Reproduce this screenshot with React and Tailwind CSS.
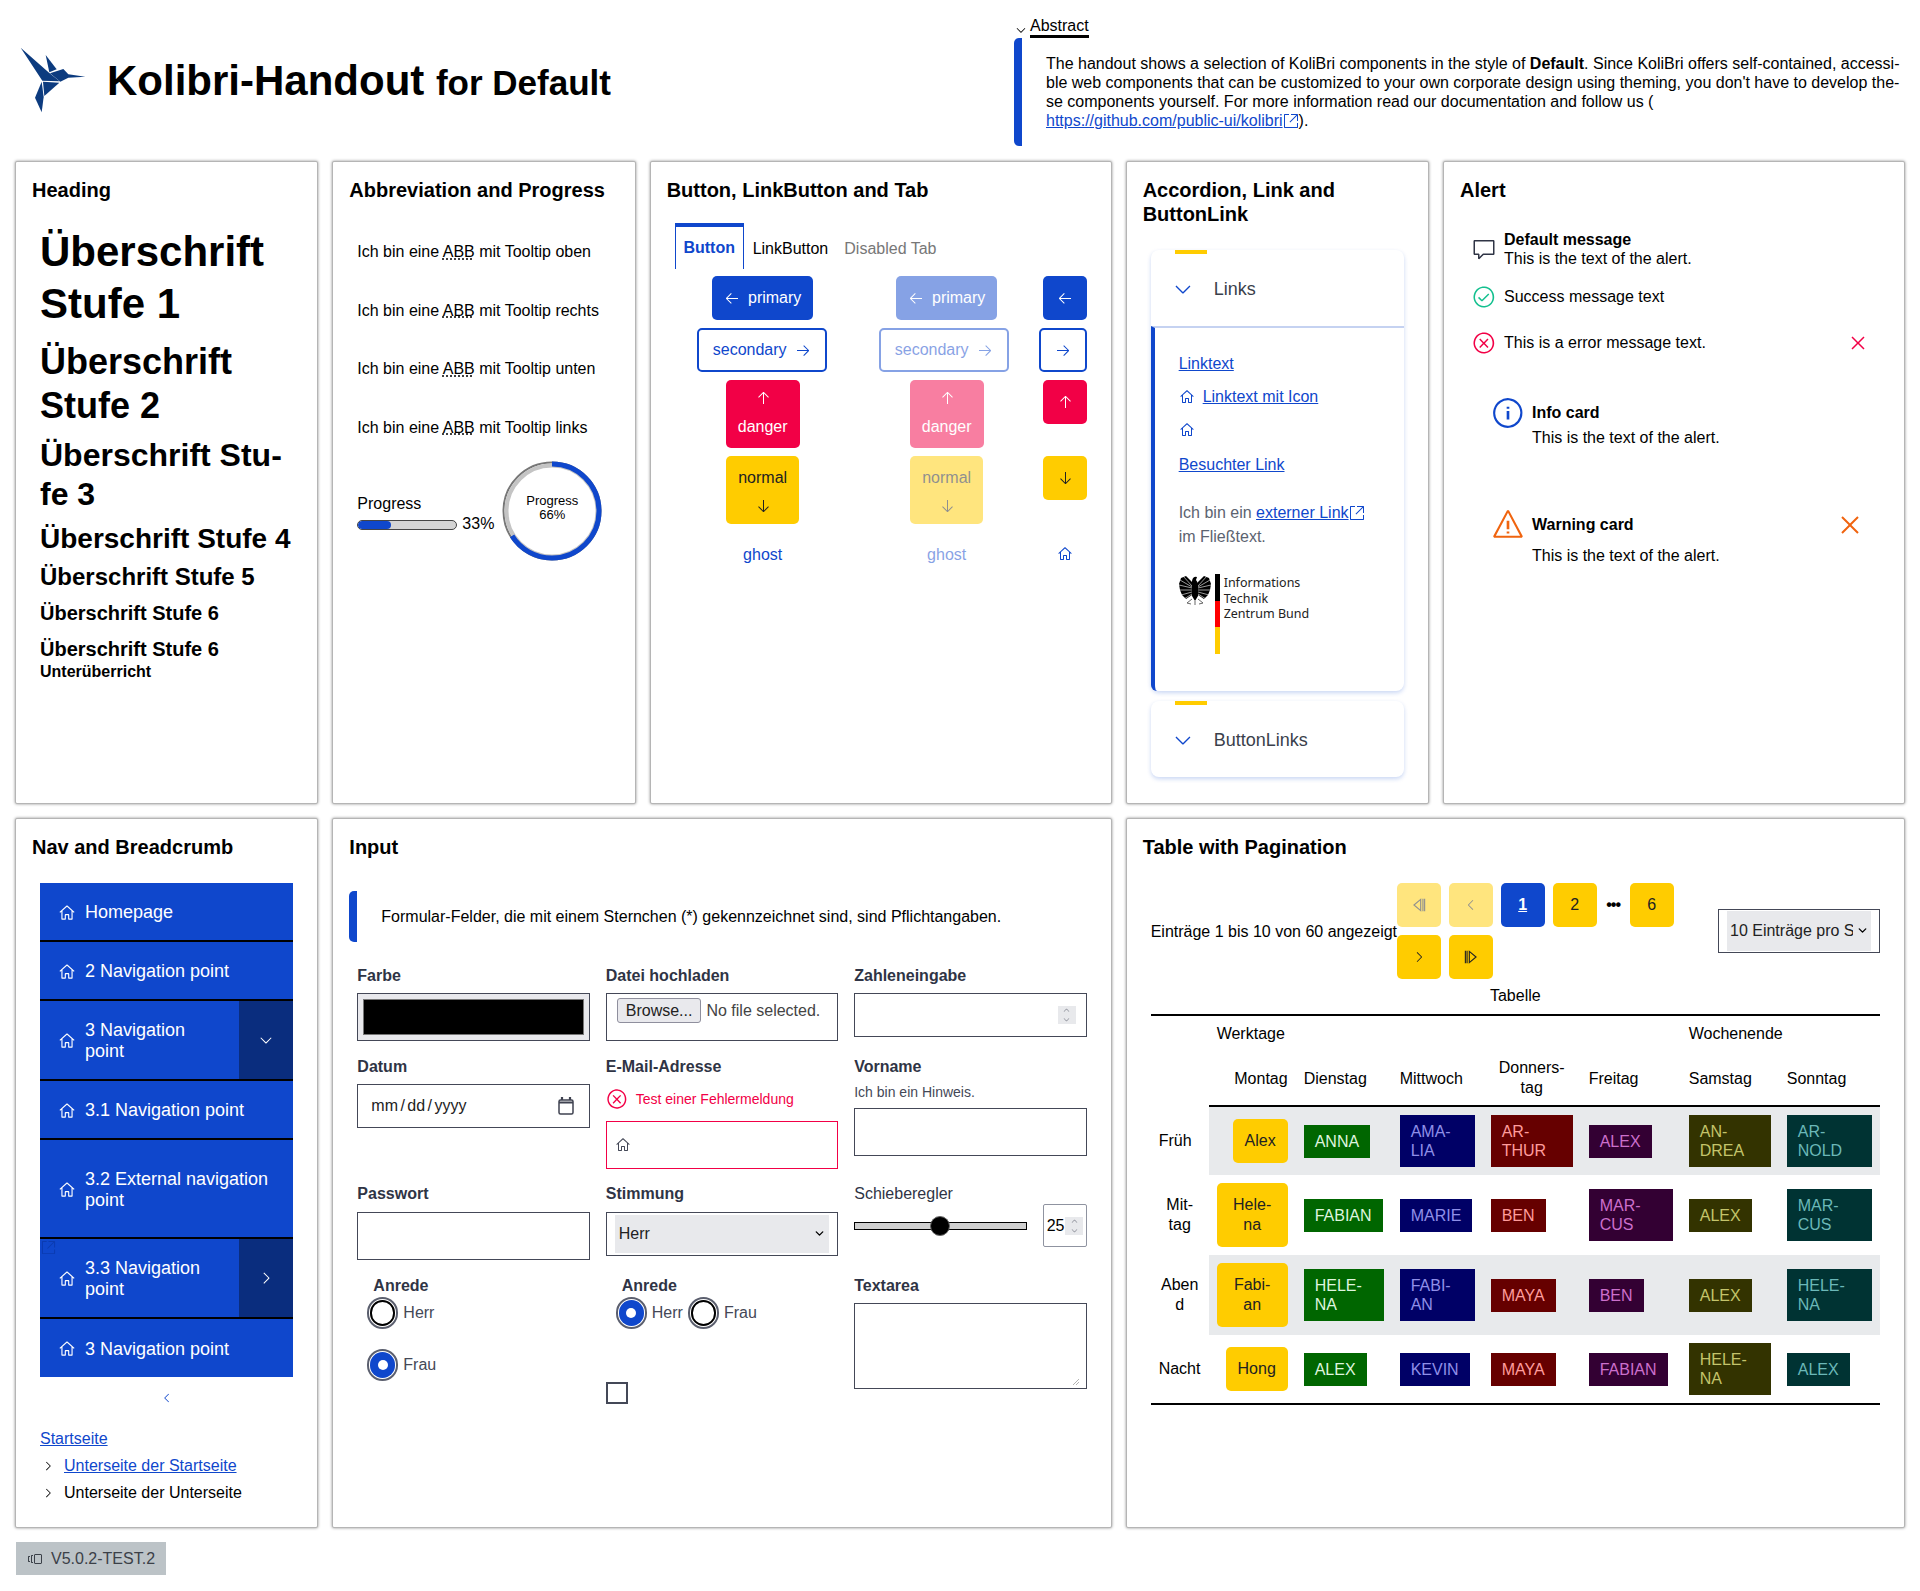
import React from 'react';
import {
  VscArrowDown, VscArrowLeft, VscArrowRight, VscArrowUp, VscChevronDown, VscChevronLeft,
  VscChevronRight, VscChevronUp, VscClose, VscComment, VscError, VscHome, VscInfo,
  VscLinkExternal, VscPass, VscVersions, VscWarning,
} from 'react-icons/vsc';
import { ChevronDown } from 'lucide-react';

// Small drawings that the icon package does not have
const KolibriLogo = () => (
  <svg width="90" height="80" viewBox="0 0 270 240" className="shrink-0">
    <g fill="#0c3b7f">
      <polygon points="32,20 118,96 149,121 97,119" />
      <polygon points="107,42 140,85 118,94" />
      <polygon points="120,97 160,84 175,100 226,107 175,110 151,122" />
      <polygon points="99,122 148,125 103,165" />
      <polygon points="95,122 101,168 95,214 75,170" />
    </g>
  </svg>
);

const Eagle = () => (
  <svg width="32" height="30" viewBox="0 0 32 30" className="shrink-0">
    <path d="M13 7 L7 1 L2 3 L0 9 L1 15 L3 20 L7 24 L13 20 Z" fill="#000" />
    <path d="M19 7 L25 1 L30 3 L32 9 L31 15 L29 20 L25 24 L19 20 Z" fill="#000" />
    <g stroke="#fff" strokeWidth="0.6" fill="none">
      <path d="M13 11 L4 1 M13 12 L1 5 M13 13 L0 10 M13 15 L0 15 M13 17 L2 20 M13 19 L5 24" />
      <path d="M19 11 L28 1 M19 12 L31 5 M19 13 L32 10 M19 15 L32 15 M19 17 L30 20 M19 19 L27 24" />
    </g>
    <path d="M13 6 Q14 1 18 2 L17 5 L19 8 L19 21 L16 26 L13 21 Z" fill="#000" />
    <g stroke="#555" strokeWidth="0.9" fill="none">
      <path d="M13 24 L8 28 L12 29 M19 24 L24 28 L20 29 M16 26 L16 30" />
    </g>
  </svg>
);

const FirstIcon = () => (
  <svg width="18" height="18" viewBox="0 0 16 16" fill="none" stroke="currentColor" strokeWidth="1">
    <path d="M9.5 3 L3.5 8 L9.5 13 Z M11.5 2.5 V13.5" />
    <path d="M13 2.5 V13.5" />
  </svg>
);

const LastIcon = () => (
  <svg width="18" height="18" viewBox="0 0 16 16" fill="none" stroke="currentColor" strokeWidth="1">
    <path d="M6.5 3 L12.5 8 L6.5 13 Z M4.5 2.5 V13.5" />
    <path d="M3 2.5 V13.5" />
  </svg>
);

const CalendarIcon = () => (
  <svg width="16" height="18" viewBox="0 0 16 18" fill="none" stroke="#3f4250" strokeWidth="1.5">
    <rect x="1" y="3" width="14" height="14" rx="1.5" />
    <path d="M1 5.5 H15 M4 0 V3 M12 0 V3" strokeWidth="2.2" />
  </svg>
);

const Card = ({ title, className, children }) => (
  <section className={`flex flex-col border border-[#b5b5b5] rounded-[2px] shadow-[0_0_3px_rgba(0,0,0,0.45)] p-4 bg-white ${className}`}>
    <h2 className="text-[20px] leading-6 font-bold text-black">{title}</h2>
    {children}
  </section>
);

const Label = ({ children, className = '' }) => (
  <div className={`h-5 leading-5 font-bold text-[#2f3445] ${className}`}>{children}</div>
);

const Radio = ({ checked }) => (
  <span className="flex w-[31px] h-[32px] items-center justify-center rounded-full border-2 border-[#5b5f6e] bg-white shrink-0">
    {checked ? (
      <span className="flex w-[25px] h-[26px] items-center justify-center rounded-full bg-[#0f47cc]">
        <span className="w-[10px] h-[10px] rounded-full bg-white" />
      </span>
    ) : (
      <span className="w-[25px] h-[26px] rounded-full border-2 border-black" />
    )}
  </span>
);

const Spinner = ({ className }) => (
  <span className={`flex flex-col items-center justify-center bg-[#e8e9ec] text-[#5f6270] ${className}`}>
    <VscChevronUp size={11} />
    <VscChevronDown size={11} />
  </span>
);

const NavItem = ({ h, children, toggle, last }) => (
  <div className={`flex items-stretch text-white ${h} ${last ? '' : 'border-b-2 border-black'}`}>
    <a className="flex flex-1 items-center gap-[9px] pl-[18px] pr-4 pt-[2px] text-[18px] leading-[21px]">
      <VscHome size={18} className="shrink-0" />
      <span>{children}</span>
    </a>
    {toggle && (
      <span className="flex w-[54px] items-center justify-center bg-[#0a2d7e]">{toggle}</span>
    )}
  </div>
);

const AccordionHead = ({ children }) => (
  <div className="relative flex h-[76px] items-center gap-[19px] pl-5 pt-[2px] text-[18px] text-[#3a3f4b]">
    <span className="absolute left-6 top-0 w-8 h-1 bg-[#ffcc00]" />
    <VscChevronDown size={24} className="text-[#0f47cc]" />
    <span>{children}</span>
  </div>
);

const colors = {
  tue: 'bg-[#006600] text-[#dff5df]',
  wed: 'bg-[#000066] text-[#8f8fe8]',
  thu: 'bg-[#660000] text-[#ff9c9c]',
  fri: 'bg-[#330033] text-[#cc6fcc]',
  sat: 'bg-[#333300] text-[#c4c46a]',
  sun: 'bg-[#003333] text-[#6bb8b8]',
};
const dayKeys = ['tue', 'wed', 'thu', 'fri', 'sat', 'sun'];

const rows = [
  { head: 'Früh', headClass: 'text-left', mon: 'Alex', h: 'h-[68px]', monClass: 'w-[55px] h-11', cells: ['ANNA', 'AMA-\nLIA', 'AR-\nTHUR', 'ALEX', 'AN-\nDREA', 'AR-\nNOLD'], bg: 'bg-[#e8eaec]' },
  { head: 'Mit-\ntag', headClass: 'text-center', mon: 'Hele-\nna', h: 'h-[80px]', monClass: 'w-[71px] h-16', cells: ['FABIAN', 'MARIE', 'BEN', 'MAR-\nCUS', 'ALEX', 'MAR-\nCUS'], bg: '' },
  { head: 'Aben\nd', headClass: 'text-center', mon: 'Fabi-\nan', h: 'h-[80px]', monClass: 'w-[71px] h-16', cells: ['HELE-\nNA', 'FABI-\nAN', 'MAYA', 'BEN', 'ALEX', 'HELE-\nNA'], bg: 'bg-[#e8eaec]' },
  { head: 'Nacht', headClass: 'text-left', mon: 'Hong', h: 'h-[68px]', monClass: 'w-[62px] h-11', cells: ['ALEX', 'KEVIN', 'MAYA', 'FABIAN', 'HELE-\nNA', 'ALEX'], bg: '' },
];

const PageBtn = ({ className = 'bg-[#ffcc00] text-[#222]', children }) => (
  <span className={`flex w-11 h-11 items-center justify-center rounded-[5px] ${className}`}>{children}</span>
);

function App() {
  return (
    <div className="w-[1920px] min-h-[1591px] bg-white text-black text-[16px] font-['Liberation_Sans',Arial,sans-serif]">
      {/* Page header with logo and abstract */}
      <header className="flex h-[161px]">
        <div className="flex flex-1 items-center pl-[10px] gap-[7px]">
          <KolibriLogo />
          <h1 className="font-bold text-[42px] leading-[52px] whitespace-nowrap mt-[3px]">
            Kolibri-Handout <span className="text-[35px]">for Default</span>
          </h1>
        </div>
        <div className="w-[906px] shrink-0 pt-4">
          <div className="flex items-start">
            <span className="flex w-4 h-[21px] items-end justify-center -ml-px mr-px"><VscChevronDown size={14} /></span>
            <span className="leading-[19px] border-b-[3px] border-black">Abstract</span>
          </div>
          <div className="h-[108px] border-l-8 border-[#0f47cc] rounded-l-[5px] pl-6 pt-4 leading-[19px] whitespace-nowrap">
            The handout shows a selection of KoliBri components in the style of <b>Default</b>. Since KoliBri offers self-contained, accessi-<br />
            ble web components that can be customized to your own corporate design using theming, you don't have to develop the-<br />
            se components yourself. For more information read our documentation and follow us (<br />
            <a className="text-[#0f47cc] underline">https://github.com/public-ui/kolibri<VscLinkExternal size={16} className="inline align-text-bottom" /></a>).
          </div>
        </div>
      </header>

      <main className="grid grid-cols-12 grid-rows-[643px_710px] gap-x-[14px] gap-y-[14px] px-[15px]">
        <Card title="Heading" className="col-span-2">
          <div className="mt-6 px-2 font-bold">
            <div className="text-[42px] leading-[52px]">Überschrift<br />Stufe 1</div>
            <div className="mt-[10px] text-[36px] leading-[44px]">Überschrift<br />Stufe 2</div>
            <div className="mt-2 text-[32px] leading-[39px]">Überschrift Stu-<br />fe 3</div>
            <div className="mt-2 text-[28px] leading-[34px]">Überschrift Stufe 4</div>
            <div className="mt-[6px] text-[24px] leading-[29px]">Überschrift Stufe 5</div>
            <div className="mt-[10px] text-[20px] leading-6">Überschrift Stufe 6</div>
            <div className="mt-3 text-[20px] leading-6">Überschrift Stufe 6</div>
            <div className="mt-px text-[16px] leading-[19px]">Unterüberricht</div>
          </div>
        </Card>

        <Card title="Abbreviation and Progress" className="col-span-2">
          <div className="mt-[21px] px-2">
            {['oben', 'rechts', 'unten', 'links'].map(side => (
              <div key={side} className="flex h-[58.6px] items-center whitespace-nowrap">
                <span>
                  Ich bin eine <abbr className="underline decoration-dotted">ABB</abbr> mit Tooltip {side}
                </span>
              </div>
            ))}
            <div className="mt-[4px] flex items-center">
              <div className="w-[145px] shrink-0 mt-[5px]">
                <div className="leading-5">Progress</div>
                <div className="flex items-center gap-[5px]">
                  <div className="mt-[3px] w-[100px] h-[10px] rounded-full border border-[#444] bg-[#d4d4d4] overflow-hidden shrink-0">
                    <div className="w-[33px] h-full rounded-full bg-[#0f47cc]" />
                  </div>
                  <span className="leading-5">33%</span>
                </div>
              </div>
              <div className="relative w-[100px] h-[100px] shrink-0">
                <svg width="100" height="100" viewBox="0 0 100 100" className="-rotate-90">
                  <circle cx="50" cy="50" r="48.5" fill="none" stroke="#777" strokeWidth="2" />
                  <circle cx="50" cy="50" r="45.5" fill="none" stroke="#c4c4c4" strokeWidth="4" />
                  <circle cx="50" cy="50" r="47" fill="none" stroke="#0f47cc" strokeWidth="5" strokeDasharray="195 296" />
                </svg>
                <div className="absolute inset-0 flex flex-col items-center justify-center pb-[6px] text-[13px] leading-[14px]">
                  <span>Progress</span>
                  <span>66%</span>
                </div>
              </div>
            </div>
          </div>
        </Card>

        <Card title="Button, LinkButton and Tab" className="col-span-3">
          <div className="mt-[21px] px-2">
            <div className="flex h-[46px]">
              <span className="flex w-[69px] items-center justify-center border-t-4 border-x border-[#0f47cc] font-bold text-[#0f47cc]">Button</span>
              <span className="ml-[9px] flex items-center pt-[5px]">LinkButton</span>
              <span className="ml-4 flex items-center pt-[5px] text-[#777]">Disabled Tab</span>
            </div>
            <div className="mt-[7px] grid grid-cols-[176px_176px_44px] grid-rows-[44px_44px_68px_68px_44px] gap-2 justify-items-center items-start">
              {[false, true].map(off => (
                <button key={String(off)} className={`flex w-[101px] h-11 items-center justify-center gap-2 rounded-[5px] bg-[#0f47cc] text-white ${off ? 'opacity-50' : ''}`}>
                  <VscArrowLeft size={16} /> primary
                </button>
              ))}
              <button className="flex w-11 h-11 items-center justify-center rounded-[5px] bg-[#0f47cc] text-white"><VscArrowLeft size={16} /></button>

              <button className="flex w-[130px] h-11 -ml-[2px] items-center justify-center gap-2 rounded-[5px] border-2 border-[#0f47cc] text-[#0f47cc]">
                secondary <VscArrowRight size={16} />
              </button>
              <button className="flex w-[130px] h-11 -ml-[6px] items-center justify-center gap-2 rounded-[5px] border-2 border-[#0f47cc] text-[#0f47cc] opacity-50">
                secondary <VscArrowRight size={16} />
              </button>
              <button className="flex w-12 h-11 -ml-1 items-center justify-center rounded-[5px] border-2 border-[#0f47cc] text-[#0f47cc]"><VscArrowRight size={16} /></button>

              {[false, true].map(off => (
                <button key={String(off)} className={`flex flex-col w-[74px] h-[68px] items-center justify-center gap-[9px] pt-px rounded-[5px] bg-[#f20046] text-white ${off ? 'opacity-50' : ''}`}>
                  <VscArrowUp size={16} /> danger
                </button>
              ))}
              <button className="flex w-11 h-11 items-center justify-center rounded-[5px] bg-[#f20046] text-white"><VscArrowUp size={16} /></button>

              {[false, true].map(off => (
                <button key={String(off)} className={`flex flex-col w-[73px] h-[68px] items-center justify-center gap-[8px] rounded-[5px] bg-[#ffcc00] text-[#222] ${off ? 'opacity-50' : ''}`}>
                  normal <VscArrowDown size={16} />
                </button>
              ))}
              <button className="flex w-11 h-11 items-center justify-center rounded-[5px] bg-[#ffcc00] text-[#222]"><VscArrowDown size={16} /></button>

              <span className="flex h-11 items-center pt-px text-[#0f47cc]">ghost</span>
              <span className="flex h-11 items-center pt-px text-[#0f47cc] opacity-50">ghost</span>
              <span className="flex w-11 h-11 items-center justify-center text-[#0f47cc]"><VscHome size={16} /></span>
            </div>
          </div>
        </Card>

        <Card title={<>Accordion, Link and<br />ButtonLink</>} className="col-span-2">
          <div className="mt-6 px-2">
            <div className="rounded-[8px] shadow-[0_2px_4px_rgba(15,71,204,0.22)] bg-white">
              <AccordionHead>Links</AccordionHead>
              <div className="h-[365px] border-t-2 border-t-[#c5d2f1] border-l-4 border-l-[#0f47cc] rounded-bl-[6px] pl-6 text-[#0f47cc]">
                <div className="mt-[26px] leading-5 underline">Linktext</div>
                <div className="mt-[13px] flex items-center gap-[8px] leading-5">
                  <VscHome size={16} /><span className="underline">Linktext mit Icon</span>
                </div>
                <div className="mt-[13px] h-5 flex items-center"><VscHome size={16} /></div>
                <div className="mt-[15px] leading-5 underline">Besuchter Link</div>
                <div className="mt-[26px] leading-6 text-[#5c6370] whitespace-nowrap">
                  Ich bin ein <a className="text-[#0f47cc] underline">externer Link<VscLinkExternal size={16} className="inline align-text-bottom" /></a><br />im Fließtext.
                </div>
                <div className="mt-[25px] flex">
                  <div className="pt-px mr-[4px]"><Eagle /></div>
                  <div className="w-[5px] h-20 shrink-0 bg-[linear-gradient(#000_33.3%,#f00_33.3%,#f00_66.6%,#fc0_66.6%)]" />
                  <div className="ml-1 pt-px font-['Noto_Sans',sans-serif] text-[12.5px] leading-[15.5px] text-[#222]">Informations<br />Technik<br />Zentrum Bund</div>
                </div>
              </div>
            </div>
            <div className="mt-[10px] rounded-[8px] shadow-[0_2px_4px_rgba(15,71,204,0.22)] bg-white">
              <AccordionHead>ButtonLinks</AccordionHead>
            </div>
          </div>
        </Card>

        <Card title="Alert" className="col-span-3">
          <div className="mt-[29px] px-2">
            <div className="ml-1 flex items-center gap-2 h-9 leading-[19px]">
              <VscComment size={24} className="shrink-0 text-[#2f3445]" />
              <div><b>Default message</b><br />This is the text of the alert.</div>
            </div>
            <div className="mt-5 ml-1 flex items-center gap-2 h-5">
              <VscPass size={24} className="shrink-0 text-[#14c08f]" />
              <span>Success message text</span>
            </div>
            <div className="mt-[26px] ml-1 flex items-center gap-2 h-5">
              <VscError size={24} className="shrink-0 text-[#f20046]" />
              <span className="flex-1">This is a error message text.</span>
              <VscClose size={24} className="mr-[10px] text-[#f20046]" />
            </div>
            <div className="mt-[50px] ml-[23px] flex items-center gap-[7px] h-5 font-bold">
              <VscInfo size={34} className="shrink-0 -my-2 text-[#0f47cc]" />
              <span>Info card</span>
            </div>
            <div className="mt-[5px] ml-16 leading-5">This is the text of the alert.</div>
            <div className="mt-[67px] ml-[23px] flex items-center gap-[7px] h-5 font-bold">
              <VscWarning size={34} className="shrink-0 -my-2 text-[#f0640f]" />
              <span className="flex-1">Warning card</span>
              <VscClose size={32} className="mr-[14px] -my-1 text-[#f0640f]" />
            </div>
            <div className="mt-[11px] ml-16 leading-5">This is the text of the alert.</div>
          </div>
        </Card>

        <Card title="Nav and Breadcrumb" className="col-span-2">
          <div className="mt-6 px-2">
            <nav className="relative bg-[#0f47cc]">
              <NavItem h="h-[59px]">Homepage</NavItem>
              <NavItem h="h-[59px]">2 Navigation point</NavItem>
              <NavItem h="h-[80px]" toggle={<VscChevronDown size={18} />}>3 Navigation point</NavItem>
              <NavItem h="h-[59px]">3.1 Navigation point</NavItem>
              <NavItem h="h-[99px]">3.2 External navigation point</NavItem>
              <NavItem h="h-[80px]" toggle={<VscChevronRight size={18} />}>3.3 Navigation point</NavItem>
              <NavItem h="h-[58px]" last>3 Navigation point</NavItem>
              <VscLinkExternal size={15} className="absolute left-px top-[357px] text-[#0b3bb0]" />
            </nav>
            <div className="mt-[10px] flex h-[22px] items-center justify-center text-[#0f47cc]"><VscChevronLeft size={14} /></div>
            <div className="mt-5 leading-5 text-[#0f47cc] underline">Startseite</div>
            <div className="mt-[7px] flex items-center leading-5 whitespace-nowrap">
              <VscChevronRight size={14} className="ml-[1px] mr-[9px] shrink-0" />
              <a className="text-[#0f47cc] underline">Unterseite der Startseite</a>
            </div>
            <div className="mt-[7px] flex items-center leading-5 whitespace-nowrap">
              <VscChevronRight size={14} className="ml-[1px] mr-[9px] shrink-0" />
              <span>Unterseite der Unterseite</span>
            </div>
          </div>
        </Card>

        <Card title="Input" className="col-span-5">
          <div className="mt-8 h-[51px] flex items-center border-l-8 border-[#0f47cc] rounded-l-[5px] pl-6">
            Formular-Felder, die mit einem Sternchen (*) gekennzeichnet sind, sind Pflichtangaben.
          </div>
          <div className="mt-6 px-2 grid grid-cols-3 grid-rows-[91px_127px_92px_120px] gap-x-4">
            <div>
              <Label>Farbe</Label>
              <div className="mt-[7px] h-12 border border-[#444857] bg-[#e9e9ed] p-[5px]">
                <div className="h-full bg-black border border-[#777]" />
              </div>
            </div>
            <div>
              <Label>Datei hochladen</Label>
              <div className="mt-[7px] h-12 flex items-start gap-[5px] border border-[#444857] px-[10px] pt-[4px] whitespace-nowrap text-[#444]">
                <span className="h-[25px] leading-[23px] px-2 rounded-[3px] border border-[#8f8f9d] bg-[#e9e9ed] text-[#222]">Browse...</span>
                <span className="leading-[25px]">No file selected.</span>
              </div>
            </div>
            <div>
              <Label>Zahleneingabe</Label>
              <div className="relative mt-[7px] h-11 border border-[#444857]">
                <Spinner className="absolute right-[10px] top-[12px] w-[18px] h-[18px]" />
              </div>
            </div>

            <div>
              <Label>Datum</Label>
              <div className="mt-[7px] h-11 flex items-center justify-between border border-[#444857] pl-[13px] pr-[15px] text-[#222]">
                <span className="whitespace-pre [word-spacing:-2px]">mm / dd / yyyy</span>
                <CalendarIcon />
              </div>
            </div>
            <div>
              <Label>E-Mail-Adresse</Label>
              <div className="mt-3 flex items-center gap-2 h-[20px] text-[14px] text-[#f20046]">
                <VscError size={22} className="shrink-0" /> Test einer Fehlermeldung
              </div>
              <div className="mt-3 h-12 flex items-center border border-[#f20046] pl-2 text-[#444857]">
                <VscHome size={16} />
              </div>
            </div>
            <div>
              <Label>Vorname</Label>
              <div className="mt-[5px] h-[20px] leading-5 text-[14px] text-[#444857]">Ich bin ein Hinweis.</div>
              <input className="block mt-[6px] w-full h-12 border border-[#444857]" />
            </div>

            <div>
              <Label>Passwort</Label>
              <input type="password" className="block mt-2 w-full h-12 border border-[#444857]" />
            </div>
            <div>
              <Label>Stimmung</Label>
              <div className="relative mt-2 h-11 border border-[#444857] py-[2px] px-2">
                <select className="block w-full h-full appearance-none bg-[#e8e9ec] pl-1 text-[#222] outline-none">
                  <option>Herr</option>
                </select>
                <ChevronDown size={13} strokeWidth={2.5} className="absolute right-[11px] top-[14px]" />
              </div>
            </div>
            <div>
              <div className="h-5 leading-5 text-[#2f3445]">Schieberegler</div>
              <div className="flex h-[43px] items-center">
                <div className="relative w-[173px] h-2 border border-black bg-[#d0d0d0] shrink-0">
                  <span className="absolute left-[75px] -top-[7px] w-5 h-5 rounded-full bg-black border border-[#666]" />
                </div>
                <div className="ml-auto w-[44px] h-full flex items-center rounded-[2px] border border-[#8f93a0] pl-[3px] gap-[1px]">
                  <span>25</span>
                  <Spinner className="w-[18px] h-[18px]" />
                </div>
              </div>
            </div>

            <div>
              <Label className="pl-4">Anrede</Label>
              <div className="ml-[10px] mt-px flex items-center gap-[5px] h-8"><Radio /> <span className="text-[#444857]">Herr</span></div>
              <div className="ml-[10px] mt-5 flex items-center gap-[5px] h-8"><Radio checked /> <span className="text-[#444857]">Frau</span></div>
            </div>
            <div>
              <Label className="pl-4">Anrede</Label>
              <div className="ml-[10px] mt-px flex items-center gap-[5px] h-8">
                <Radio checked /> <span className="text-[#444857]">Herr</span>
                <Radio /> <span className="text-[#444857]">Frau</span>
              </div>
              <div className="mt-[53px] w-[22px] h-[22px] border-2 border-[#444857]" />
            </div>
            <div>
              <Label>Textarea</Label>
              <div className="relative mt-[7px] h-[86px] border border-[#444857]">
                <svg width="6" height="6" viewBox="0 0 8 8" className="absolute right-[7px] bottom-[3px]" stroke="#999" strokeWidth="1">
                  <path d="M0 8 L8 0 M4 8 L8 4" />
                </svg>
              </div>
            </div>
          </div>
        </Card>

        <Card title="Table with Pagination" className="col-span-5">
          <div className="mt-6 px-2">
            <div className="flex items-center">
              <span className="w-[246px] shrink-0 whitespace-nowrap pt-px">Einträge 1 bis 10 von 60 angezeigt</span>
              <div className="flex flex-wrap w-[300px] gap-2 items-center">
                <PageBtn className="bg-[#ffcc00] text-[#222] opacity-50"><FirstIcon /></PageBtn>
                <PageBtn className="bg-[#ffcc00] text-[#222] opacity-50"><VscChevronLeft size={16} /></PageBtn>
                <PageBtn className="bg-[#0f47cc] text-white font-bold underline">1</PageBtn>
                <PageBtn>2</PageBtn>
                <span className="w-[17px] text-center font-bold tracking-[-1px]">•••</span>
                <PageBtn>6</PageBtn>
                <PageBtn><VscChevronRight size={16} /></PageBtn>
                <PageBtn><LastIcon /></PageBtn>
              </div>
              <div className="relative ml-auto w-[162px] h-11 border border-[#444857] py-px px-2">
                <select className="block w-full h-full appearance-none bg-[#e8e9ec] pl-[3px] pr-[18px] text-[#222] outline-none">
                  <option>10 Einträge pro Seite</option>
                </select>
                <ChevronDown size={13} strokeWidth={2.5} className="absolute right-[10px] top-[14px]" />
              </div>
            </div>
            <div className="mt-[7px] h-5 leading-5 text-center">Tabelle</div>
            <table className="mt-2 w-[729px] table-fixed border-collapse border-t-2 border-b-2 border-black">
              <colgroup>
                <col className="w-[58px]" />
                <col className="w-[87px]" />
                <col className="w-[96px]" />
                <col className="w-[91px]" />
                <col className="w-[98px]" />
                <col className="w-[100px]" />
                <col className="w-[98px]" />
                <col className="w-[101px]" />
              </colgroup>
              <thead>
                <tr className="h-[35px]">
                  <th />
                  <th colSpan={5} className="px-2 pt-[2px] text-left font-normal">Werktage</th>
                  <th colSpan={2} className="px-2 pt-[2px] text-left font-normal">Wochenende</th>
                </tr>
                <tr className="h-[56px]">
                  <th />
                  <th className="px-2 pt-[2px] text-right font-normal border-b-2 border-black">Montag</th>
                  {['Dienstag', 'Mittwoch'].map(d => <th key={d} className="px-2 pt-[2px] text-left font-normal border-b-2 border-black">{d}</th>)}
                  <th className="px-2 text-center font-normal leading-5 border-b-2 border-black">Donners-<br />tag</th>
                  {['Freitag', 'Samstag', 'Sonntag'].map(d => <th key={d} className="px-2 pt-[2px] text-left font-normal border-b-2 border-black">{d}</th>)}
                </tr>
              </thead>
              <tbody>
                {rows.map(row => (
                  <tr key={row.head} className={row.h}>
                    <th className={`px-2 font-normal leading-5 whitespace-pre-line ${row.headClass}`}>{row.head}</th>
                    <td className={`p-2 ${row.bg}`}>
                      <div className="flex justify-end">
                        <span className={`flex items-center justify-center text-center whitespace-pre-line leading-5 rounded-[5px] bg-[#ffcc00] text-[#222] ${row.monClass}`}>{row.mon}</span>
                      </div>
                    </td>
                    {row.cells.map((name, i) => (
                      <td key={i} className={`p-2 ${row.bg}`}>
                        <span className={`block ${name.includes('\n') ? '' : 'w-fit'} px-[11px] py-[7px] leading-[19px] whitespace-pre-line ${colors[dayKeys[i]]}`}>{name}</span>
                      </td>
                    ))}
                  </tr>
                ))}
              </tbody>
            </table>
          </div>
        </Card>
      </main>

      <div className="mt-[14px] ml-4 flex w-[150px] h-[33px] items-center gap-[8px] bg-[#bcc3c7] pl-[11px] text-[#3b4048]">
        <VscVersions size={16} />
        <span>V5.0.2-TEST.2</span>
      </div>
    </div>
  );
}

export default App;
